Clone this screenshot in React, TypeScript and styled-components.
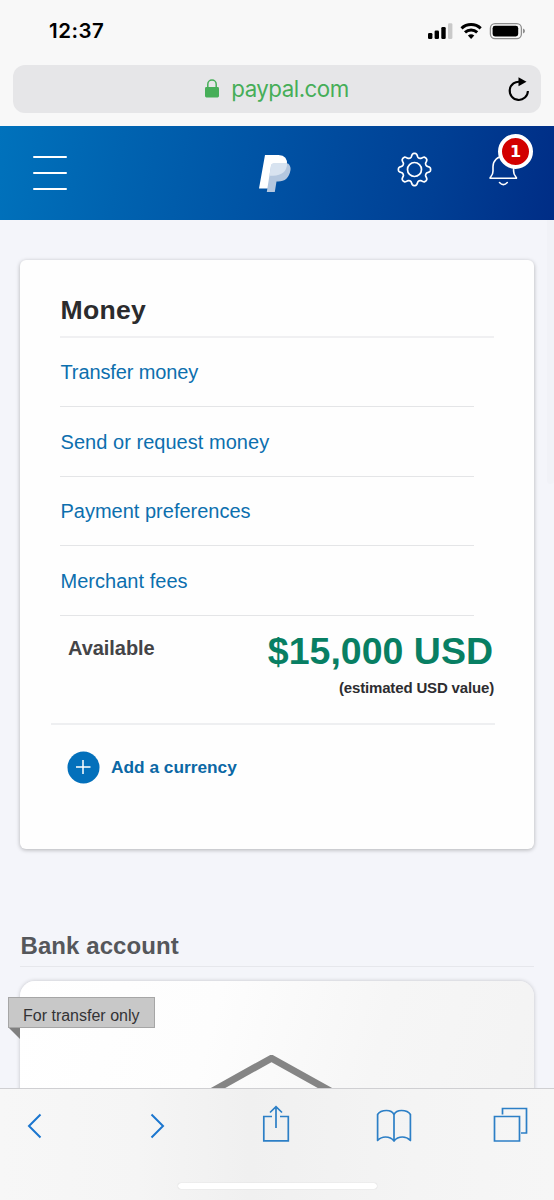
import React from "react";
import styled, { createGlobalStyle } from "styled-components";

const GlobalStyle = createGlobalStyle`
  * { box-sizing: border-box; }
  html, body { margin: 0; padding: 0; }
  body { font-family: "Liberation Sans", Arial, sans-serif; background: #f4f6fb; }
`;

const Screen = styled.div`
  width: 554px;
  height: 1200px;
  overflow: hidden;
  display: flex;
  flex-direction: column;
  background: #f4f5fa;
`;

const BrowserTop = styled.div`
  height: 126px;
  flex: none;
  background: #f8f8f8;
  display: flex;
  flex-direction: column;
`;

const StatusBar = styled.div`
  height: 65px;
  padding: 0 29px 4px 49px;
  display: flex;
  align-items: center;
  justify-content: space-between;
`;

const Clock = styled.span`
  font: 600 20.5px/24px Inter, sans-serif;
  letter-spacing: 0.5px;
  color: #000;
`;

const StatusIcons = styled.svg`
  display: block;
`;

const AddressBar = styled.div`
  height: 48px;
  margin: 0 13px;
  border-radius: 12px;
  background: #e6e6e8;
  display: grid;
  grid-template-columns: 1fr auto 1fr;
  align-items: center;
`;

const Address = styled.div`
  grid-column: 2;
  display: flex;
  align-items: center;
  gap: 12px;
  padding-bottom: 1px;
  color: #46ae58;
  font: 400 22.3px/28px Inter, sans-serif;
  letter-spacing: -0.5px;
`;

const Reload = styled.svg`
  justify-self: end;
  margin-right: 11px;
`;

const Header = styled.header`
  height: 94px;
  flex: none;
  display: grid;
  grid-template-columns: 259px 138px 90px 1fr;
  align-items: start;
  background: linear-gradient(100deg, #0072bc 0%, #0063b0 22%, #0051a3 50%, #003f94 78%, #002d86 100%);
`;

const MenuButton = styled.div`
  width: 34px;
  height: 34px;
  margin: 30px 0 0 33px;
  display: flex;
  flex-direction: column;
  justify-content: space-between;
`;

const MenuLine = styled.span`
  height: 2px;
  border-radius: 1px;
  background: #fff;
`;

const Logo = styled.svg`
  margin-top: 29px;
`;

const Gear = styled.svg`
  margin-top: 26px;
`;

const Bell = styled.div`
  position: relative;
  width: 34px;
  margin: 26px 0 0 1px;
`;

const Badge = styled.span`
  position: absolute;
  left: 10px;
  top: -18px;
  width: 35px;
  height: 35px;
  border: 4px solid #fff;
  border-radius: 50%;
  background: #d20000;
  color: #fff;
  font: 700 16px/27px "DejaVu Sans", sans-serif;
  text-align: center;
`;

const Page = styled.main`
  position: relative;
  flex: 1;
  min-height: 0;
  overflow: hidden;
  padding: 40px 20px 0;
`;

const ScrollShade = styled.span`
  position: absolute;
  right: 0;
  top: 0;
  width: 7px;
  height: 264px;
  border-radius: 0 0 4px 4px;
  background: #f1f2f7;
`;

const MoneyCard = styled.section`
  height: 589px;
  border-radius: 6px;
  background: #fefefe;
  box-shadow: 0 1px 4px rgba(0, 0, 0, 0.28);
  padding: 30px 40px 0;
`;

const CardTitle = styled.h2`
  margin: 0;
  height: 47.6px;
  padding-left: 0.5px;
  border-bottom: 2px solid #f0f0f2;
  color: #2b2b2d;
  font-size: 26.6px;
  line-height: 40px;
  letter-spacing: 0.25px;
`;

const Links = styled.nav`
  width: 414px;
  display: flex;
  flex-direction: column;
`;

const LinkRow = styled.a`
  height: 69.6px;
  padding: 1.4px 0 0 0.5px;
  display: flex;
  align-items: center;
  border-bottom: 1px solid #e4e5e7;
  color: #0c6fae;
  font-size: 20px;
  letter-spacing: ${(p: { $spacing: number }) => p.$spacing}px;
`;

const Balance = styled.div`
  height: 109px;
  margin: 0 -1px 0 -9px;
  padding: 0 1px 0 17px;
  display: flex;
  justify-content: space-between;
  border-bottom: 2px solid #eeeff1;
`;

const BalanceLabel = styled.span`
  margin-top: 20.4px;
  color: #444447;
  font: 700 20px/24px "Liberation Sans", sans-serif;
  letter-spacing: -0.05px;
`;

const BalanceValue = styled.div`
  display: flex;
  flex-direction: column;
  align-items: flex-end;
`;

const Amount = styled.strong`
  margin: 13.4px 1px 0 0;
  color: #087f63;
  font-size: 37.5px;
  line-height: 44px;
`;

const Note = styled.strong`
  margin-top: 5px;
  color: #2d2d30;
  font-size: 15px;
  line-height: 20px;
  letter-spacing: -0.16px;
`;

const AddCurrency = styled.div`
  margin: 26px 0 0 7px;
  height: 33px;
  display: flex;
  align-items: center;
  gap: 11px;
  color: #0b68a5;
  font-size: 17.3px;
  font-weight: 700;
  line-height: 20px;
`;

const SectionTitle = styled.h2`
  margin: 80px 0 0;
  height: 38px;
  padding-left: 0.5px;
  border-bottom: 1px solid #e6e7ec;
  color: #55575b;
  font-size: 24px;
  line-height: 33px;
  letter-spacing: 0.08px;
`;

const BankCard = styled.section`
  position: relative;
  height: 240px;
  margin-top: 14px;
  border-radius: 15px;
  background: linear-gradient(105deg, #ffffff 0%, #fdfdfd 35%, #f6f6f6 65%, #f3f3f3 100%);
  box-shadow: 0 0 4px rgba(0, 0, 0, 0.2);
`;

const Ribbon = styled.span`
  position: absolute;
  left: -12px;
  top: 16px;
  width: 147px;
  height: 31px;
  padding-left: 14px;
  border: 1px solid #a6a6a6;
  background: #c8c8c8;
  color: #333335;
  font-size: 16px;
  line-height: 36px;
  white-space: nowrap;

  &::after {
    content: "";
    position: absolute;
    left: 0;
    top: 30px;
    border-top: 11px solid #808080;
    border-left: 11px solid transparent;
  }
`;

const House = styled.svg`
  display: block;
  margin: 0 auto;
  padding-top: 74px;
`;

const Toolbar = styled.footer`
  height: 112px;
  flex: none;
  border-top: 1px solid #cfcfd2;
  background: linear-gradient(90deg, #f7f7f7 0%, #f5f5f5 25%, #f0f0f0 45%, #f4f4f4 75%, #f6f6f6 100%);
  display: flex;
  flex-direction: column;
  justify-content: space-between;
`;

const ToolbarIcons = styled.div`
  padding: 16px 0 0 27px;
  display: grid;
  grid-template-columns: 122px 113px 114px 117px 1fr;
  align-items: start;
`;

const HomeIndicator = styled.div`
  width: 199px;
  height: 6px;
  margin: 0 auto 11px;
  border-radius: 4px;
  background: #fff;
  box-shadow: 0 0 1px #bbb;
`;

const links = [
  { label: "Transfer money", spacing: -0.12 },
  { label: "Send or request money", spacing: 0.04 },
  { label: "Payment preferences", spacing: 0 },
  { label: "Merchant fees", spacing: 0.03 },
];

function gearPath() {
  const points: string[] = [];
  const steps = 160;
  for (let i = 0; i < steps; i++) {
    const a = (i / steps) * Math.PI * 2;
    const wave = Math.tanh(1.5 * Math.cos(8 * a)) / Math.tanh(1.5);
    const r = 14.2 + 1.9 * wave;
    points.push(`${(17.5 + r * Math.sin(a)).toFixed(2)} ${(17.5 - r * Math.cos(a)).toFixed(2)}`);
  }
  return `M${points.join("L")}Z`;
}

export default function App() {
  return (
    <Screen>
      <GlobalStyle />
      <BrowserTop>
        <StatusBar>
          <Clock>12:37</Clock>
          <StatusIcons width="97" height="18" viewBox="0 0 97 18">
            <rect x="0" y="11" width="4.4" height="6" rx="1.3" />
            <rect x="6.6" y="8.5" width="4.4" height="8.5" rx="1.3" />
            <rect x="13.3" y="5" width="4.4" height="12" rx="1.3" />
            <rect x="20" y="1.3" width="4.4" height="15.7" rx="1.3" fill="#c9c9c9" />
            <g fill="none" stroke="#000" strokeWidth="3">
              <path d="M33.5 6.4a14 14 0 0 1 19.2 0" />
              <path d="M37 10.4a9 9 0 0 1 12.2 0" />
            </g>
            <path d="M39.9 13.6a5 5 0 0 1 6.4 0L43.1 17Z" />
            <rect x="62.4" y="1.6" width="31" height="15" rx="4.6" fill="none" stroke="#8e8e8e" strokeWidth="1.3" />
            <rect x="64.6" y="3.8" width="25.6" height="10.6" rx="2.4" />
            <path d="M95 6.6q2 .7 2 2.5t-2 2.5z" fill="#8e8e8e" />
          </StatusIcons>
        </StatusBar>
        <AddressBar>
          <Address>
            <svg width="14" height="19" viewBox="0 0 14 19">
              <rect x="0" y="8" width="14" height="10.5" rx="1.4" fill="#46ae58" />
              <path d="M2.8 9V5.2a4.2 4.2 0 0 1 8.4 0V9" fill="none" stroke="#46ae58" strokeWidth="1.5" />
            </svg>
            paypal.com
          </Address>
          <Reload width="22" height="25" viewBox="0 0 22 25">
            <path d="M12.5 4.9A9.1 9.1 0 1 0 19.9 14" fill="none" stroke="#000" strokeWidth="2.1" />
            <path d="M10.5 .3 18.5 4.8 10.5 9.3Z" />
          </Reload>
        </AddressBar>
      </BrowserTop>

      <Header>
        <MenuButton>
          <MenuLine />
          <MenuLine />
          <MenuLine />
        </MenuButton>
        <Logo width="33" height="38" viewBox="0 0 33 38">
          <path d="M6 0H19.5Q29 .6 28 10 26 20.5 14 20.7H11.5L9 33.6H0Z" fill="#fff" />
          <path d="M12 10.7Q12.4 8.5 14.5 8.5H29Q32 11 31.5 15 29.5 26.5 19 26.5H17.5L15.8 37H7.8Z" fill="#b4c7df" />
          <path d="M12 10.7Q12.4 8.5 14.5 8.5H28.2Q27.5 20.4 14 20.7H10.4Z" fill="#d8e3f0" />
        </Logo>
        <Gear width="35" height="35" viewBox="0 0 35 35" fill="none" stroke="#fff" strokeWidth="1.7">
          <path d={gearPath()} strokeLinejoin="round" />
          <circle cx="17.5" cy="17.5" r="7" />
        </Gear>
        <Bell>
          <svg width="30" height="36" viewBox="0 0 30 36" fill="none" stroke="#fff" strokeWidth="1.6" strokeLinecap="round" strokeLinejoin="round">
            <path d="M2.2 26.2Q2 25.4 2.8 24.8 5 22.5 5 19V14.5a10.3 10.3 0 0 1 20.6 0V19Q25.6 22.5 27.8 24.8 28.6 25.4 28.4 26.2Z" />
            <path d="M11.5 30.5q3.9 4.2 7.8 0" />
          </svg>
          <Badge>1</Badge>
        </Bell>
      </Header>

      <Page>
        <ScrollShade />
        <MoneyCard>
          <CardTitle>Money</CardTitle>
          <Links>
            {links.map((l) => (
              <LinkRow key={l.label} $spacing={l.spacing}>{l.label}</LinkRow>
            ))}
          </Links>
          <Balance>
            <BalanceLabel>Available</BalanceLabel>
            <BalanceValue>
              <Amount>$15,000 USD</Amount>
              <Note>(estimated USD value)</Note>
            </BalanceValue>
          </Balance>
          <AddCurrency>
            <svg width="33" height="33" viewBox="0 0 33 33">
              <circle cx="16.5" cy="16.5" r="16" fill="#0370bb" />
              <path d="M9 16H23.5M16 9V23" stroke="#fff" strokeWidth="1.5" />
            </svg>
            Add a currency
          </AddCurrency>
        </MoneyCard>

        <SectionTitle>Bank account</SectionTitle>
        <BankCard>
          <House width="200" height="170" viewBox="0 0 200 96">
            <path d="M7 52 94.5 3.2 182 52" fill="none" stroke="#858585" strokeWidth="7" strokeLinejoin="round" />
          </House>
          <Ribbon>For transfer only</Ribbon>
        </BankCard>
      </Page>

      <Toolbar>
        <ToolbarIcons>
          <svg width="16" height="40" viewBox="0 0 16 40" fill="none" stroke="#1b76cf" strokeWidth="2">
            <path d="M13.5 9.5 2 21 13.5 32.5" />
          </svg>
          <svg width="16" height="40" viewBox="0 0 16 40" fill="none" stroke="#1b76cf" strokeWidth="2">
            <path d="M2.500 9.500 14 21 2.500 32.500" />
          </svg>
          <svg width="28" height="40" viewBox="0 0 28 40" fill="none" stroke="#2c7fc6" strokeWidth="1.7">
            <path d="M10 11.5H1.8V35.800H26.300V11.500H18M14 23V1.500M8 7.500 14 1.700 20 7.500" />
          </svg>
          <svg width="36" height="40" viewBox="0 0 36 40" fill="none" stroke="#2c7fc6" strokeWidth="1.7" strokeLinejoin="round">
            <path d="M18 9.500Q16 5.500 10.500 5.500 4 5.500 1.600 9.500V35.500Q5 32 9.500 32 15 32 18 36 21 32 26.500 32 31 32 34.400 35.500V9.500Q32 5.500 25.500 5.500 20 5.500 18 9.500V36" />
          </svg>
          <svg width="35" height="40" viewBox="0 0 35 40" fill="none" stroke="#2c7fc6" strokeWidth="1.7">
            <path d="M1.500 11.500H26.500V36H1.500ZM9.500 9.500V3.500H33.500V28H28" />
          </svg>
        </ToolbarIcons>
        <HomeIndicator />
      </Toolbar>
    </Screen>
  );
}
